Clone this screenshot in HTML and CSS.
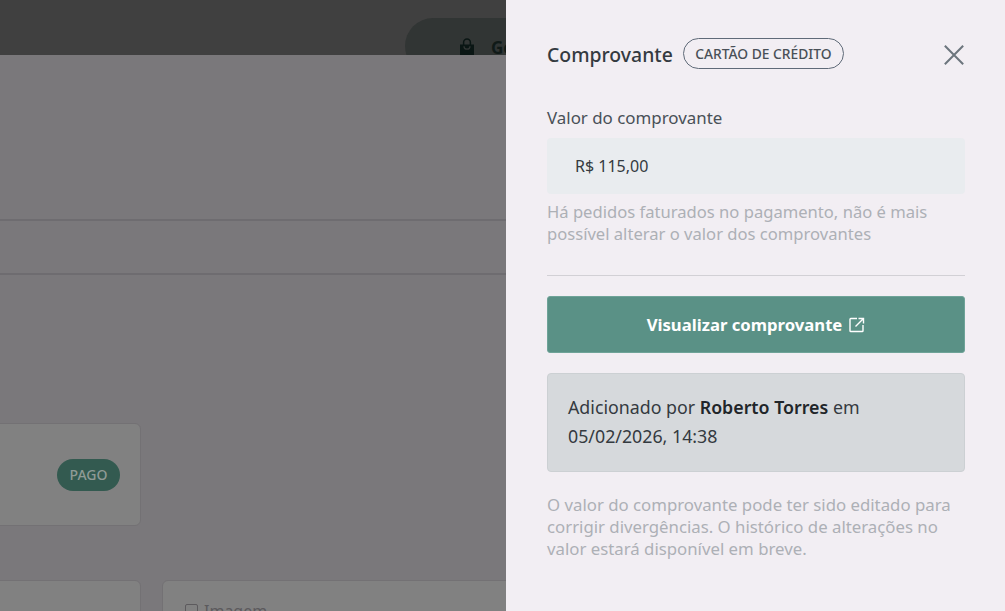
FILE: index.html
```html
<!DOCTYPE html>
<html lang="pt-BR">
<head>
<meta charset="utf-8">
<title>Comprovante</title>
<link rel="stylesheet" href="styles.css">
</head>
<body>
<div class="page">
  <header class="topbar">
    <div class="store-pill">
      <svg class="bag" viewBox="0 0 16 19" aria-hidden="true">
        <path d="M1 6.5h14v10.2a2 2 0 0 1-2 2H3a2 2 0 0 1-2-2z" fill="#0a1614"/>
        <path d="M4.6 7V4.4a3.4 3.4 0 0 1 6.8 0V7" fill="none" stroke="#0a1614" stroke-width="1.5"/>
        <path d="M5 8.2a3 3 0 0 0 6 0" fill="none" stroke="#313534" stroke-width="1.3"/>
      </svg>
      <span class="store-name">Gerenciar</span>
    </div>
  </header>
  <main class="content">
    <div class="rule rule-a"></div>
    <div class="rule rule-b"></div>
    <section class="card card-paid"><span class="paid">PAGO</span></section>
    <div class="card-row">
      <section class="card card-low"></section>
      <section class="card card-image"><span class="check"></span><span>Imagem</span></section>
    </div>
  </main>
</div>
<aside class="drawer">
  <div class="drawer-head">
    <h2 class="drawer-title">Comprovante</h2>
    <span class="method">CARTÃO DE CRÉDITO</span>
    <svg class="close" viewBox="0 0 24 24" aria-label="Fechar"><path d="M2 2l20 20M22 2L2 22"/></svg>
  </div>
  <label class="field-label">Valor do comprovante</label>
  <div class="field-value">R$ 115,00</div>
  <p class="hint hint-top">Há pedidos faturados no pagamento, não é mais possível alterar o valor dos comprovantes</p>
  <hr class="divider">
  <a class="view-btn">Visualizar comprovante
    <svg class="ext" viewBox="0 0 16 16" aria-hidden="true"><path d="M8 1.5H1.8a.8.8 0 0 0-.8.8v11.4a.8.8 0 0 0 .8.8h11.4a.8.8 0 0 0 .8-.8V8"/><path d="M6.5 9.5L14.5 1.5M9.5 1.5h5v5"/></svg>
  </a>
  <div class="added">Adicionado por <strong>Roberto Torres</strong> em 05/02/2026, 14:38</div>
  <p class="hint hint-bottom">O valor do comprovante pode ter sido editado para corrigir divergências. O histórico de alterações no valor estará disponível em breve.</p>
</aside>
</body>
</html>
```
FILE: styles.css
```css
* { box-sizing: border-box; }
html, body { margin: 0; height: 100%; overflow: hidden; }
body { font-family: "Noto Sans", "Open Sans", sans-serif; background: #7a787b; color: #343a40; }
.page { width: 506px; height: 611px; overflow: hidden; display: flex; flex-direction: column; }
.topbar { height: 55px; flex: none; background: #404040; overflow: hidden; padding: 18px 0 0 405px; }
.store-pill { width: 220px; height: 56px; border-radius: 28px; background: #313534; display: flex; align-items: flex-start; padding: 20px 0 0 54px; gap: 16px; }
.bag { width: 16px; height: 19px; flex: none; }
.store-name { font-weight: 700; font-size: 17px; line-height: 19px; color: #101a18; white-space: nowrap; }
.content { flex: 1; display: flex; flex-direction: column; }
.rule { height: 2px; background: #6e6c70; }
.rule-a { margin-top: 164px; }
.rule-b { margin-top: 52px; }
.card { background: #818181; border: 1px solid #737174; border-radius: 6px; }
.card-paid { width: 151px; height: 103px; margin: 148px 0 0 -10px; display: flex; align-items: center; justify-content: flex-end; padding-right: 20px; }
.paid { width: 63px; height: 32px; border-radius: 16px; background: #335a50; color: #8f9a96; font-size: 14px; font-weight: 500; display: flex; align-items: center; justify-content: center; }
.card-row { display: flex; gap: 21px; margin: 54px 0 0 -10px; }
.card-low { width: 151px; height: 60px; flex: none; }
.card-image { width: 400px; height: 60px; flex: none; padding: 19px 0 0 22px; display: flex; gap: 6px; font-size: 16px; color: #5c5a5d; line-height: 22px; }
.check { width: 13px; height: 13px; margin-top: 4px; border: 1.5px solid #5c5a5d; border-radius: 2px; flex: none; }
.drawer { position: fixed; top: 0; right: 0; bottom: 0; width: 499px; background: #f2eef3; padding: 38px 40px 0 41px; }
.drawer-head { display: flex; align-items: center; height: 31px; }
.drawer-title { margin: 0 10px 0 0; font-size: 19.4px; font-weight: 500; color: #343a40; line-height: 31px; position: relative; top: 1px; }
.method { height: 31px; width: 161px; border: 1.5px solid #5f6a78; border-radius: 16px; font-size: 13.8px; font-weight: 500; color: #495057; display: flex; align-items: center; justify-content: center; white-space: nowrap; }
.close { width: 22px; height: 22px; margin-left: auto; margin-top: 2px; }
.close path { fill: none; stroke: #6c757d; stroke-width: 2.2; }
.field-label { display: block; margin-top: 37px; font-size: 16.9px; line-height: 24px; color: #495057; }
.field-value { margin-top: 8px; height: 56px; background: #e9ecef; border-radius: 4px; padding-left: 28px; display: flex; align-items: center; font-size: 16px; color: #343a40; }
.hint { margin: 0; font-size: 16.6px; line-height: 22px; color: #adb0b6; }
.hint-top { margin-top: 7px; }
.divider { margin: 30px 0 20px; border: 0; height: 1px; background: #d2d0d5; }
.view-btn { height: 57px; background: #5a9186; border: 1px solid #6fa398; border-radius: 3px; color: #fff; font-size: 16.7px; font-weight: 700; display: flex; align-items: center; justify-content: center; gap: 7px; }
.ext { width: 16px; height: 16px; }
.ext path { fill: none; stroke: #fff; stroke-width: 1.4; }
.added { margin-top: 20px; height: 99px; background: #d6d9dc; border: 1px solid #ccd0d3; border-radius: 4px; padding: 19px 20px; font-size: 17.8px; line-height: 29px; color: #343a40; }
.added strong { font-weight: 600; color: #212529; }
.hint-bottom { margin-top: 22px; font-size: 16.8px; }
```
